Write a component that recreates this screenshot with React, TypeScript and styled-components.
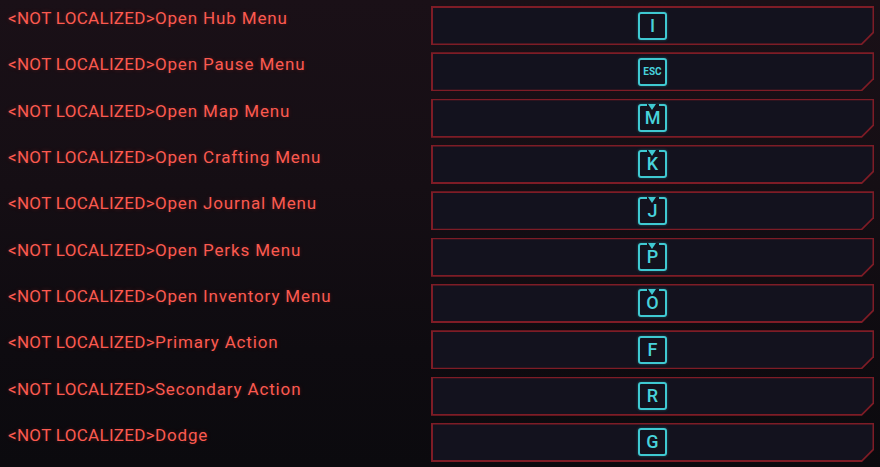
import React from "react";
import styled, { createGlobalStyle, css } from "styled-components";

const GlobalStyle = createGlobalStyle`
  * {
    box-sizing: border-box;
  }
  html, body {
    margin: 0;
    height: 100%;
  }
  body {
    background: linear-gradient(180deg, #1a1017 0%, #150e14 40%, #0e0b10 75%, #0b0a0e 100%);
  }
`;

const Page = styled.div`
  position: relative;
  width: 880px;
  height: 467px;
  padding: 6px 6px 0 8px;
  display: flex;
  flex-direction: column;
  gap: 7.33px;
  font-family: Roboto, "Liberation Sans", sans-serif;
  overflow: hidden;
`;

const Row = styled.div`
  display: grid;
  grid-template-columns: 423px 443px;
  height: 39px;
`;

const Label = styled.div`
  color: #fb5a50;
  font-size: 17px;
  line-height: 24px;
  letter-spacing: 0.3px;
  text-shadow: 0 0 4px rgba(255, 60, 50, 0.25);
  white-space: nowrap;
`;

const ActionName = styled.span`
  letter-spacing: 0.85px;
`;

const cut = 12;

const Frame = styled.div`
  height: 39px;
  padding: 1.5px;
  background: #7e1c26;
  clip-path: polygon(
    0 0,
    100% 0,
    100% calc(100% - ${cut}px),
    calc(100% - ${cut}px) 100%,
    0 100%
  );
`;

const Panel = styled.div`
  height: 100%;
  display: flex;
  align-items: center;
  justify-content: center;
  background: #13121e;
  clip-path: polygon(
    0 0,
    100% 0,
    100% calc(100% - ${cut - 0.6}px),
    calc(100% - ${cut - 0.6}px) 100%,
    0 100%
  );
`;

const Key = styled.div<{ notched: boolean; small: boolean }>`
  position: relative;
  width: 29px;
  height: 28px;
  border: 2px solid #3fc9d2;
  border-radius: 3px;
  display: flex;
  align-items: center;
  justify-content: center;
  color: #48d3dc;
  font-family: Roboto, "Liberation Sans", sans-serif;
  font-size: ${p => (p.small ? "10px" : "18px")};
  font-weight: ${p => (p.small ? 700 : 500)};
  line-height: 1;
  box-shadow: 0 0 3px rgba(63, 201, 210, 0.35);

  ${p =>
    p.notched &&
    css`
      &::before {
        content: "";
        position: absolute;
        top: -2px;
        left: 50%;
        width: 12px;
        height: 2px;
        margin-left: -6px;
        background: #13121e;
      }
      &::after {
        content: "";
        position: absolute;
        top: -2px;
        left: 50%;
        margin-left: -4.5px;
        border-left: 4.5px solid transparent;
        border-right: 4.5px solid transparent;
        border-top: 6px solid #3fc9d2;
      }
    `}
`;

const bindings = [
  { action: "Open Hub Menu", key: "I", notched: false },
  { action: "Open Pause Menu", key: "ESC", notched: false },
  { action: "Open Map Menu", key: "M", notched: true },
  { action: "Open Crafting Menu", key: "K", notched: true },
  { action: "Open Journal Menu", key: "J", notched: true },
  { action: "Open Perks Menu", key: "P", notched: true },
  { action: "Open Inventory Menu", key: "O", notched: true },
  { action: "Primary Action", key: "F", notched: false },
  { action: "Secondary Action", key: "R", notched: false },
  { action: "Dodge", key: "G", notched: false },
];

const App = () => (
  <>
    <GlobalStyle />
    <Page>
      {bindings.map(b => (
        <Row key={b.action}>
          <Label>
            {"<NOT LOCALIZED>"}
            <ActionName>{b.action}</ActionName>
          </Label>
          <Frame>
            <Panel>
              <Key notched={b.notched} small={b.key.length > 1}>
                {b.key}
              </Key>
            </Panel>
          </Frame>
        </Row>
      ))}
    </Page>
  </>
);

export default App;
